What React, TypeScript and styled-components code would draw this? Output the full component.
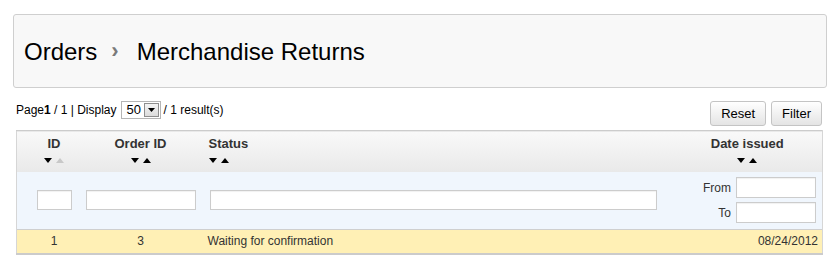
import React from "react";
import styled, { createGlobalStyle } from "styled-components";

const Global = createGlobalStyle`
  html, body { margin: 0; padding: 0; background: #fff; }
  body { font-family: "Liberation Sans", Arial, sans-serif; color: #000; }
  * { box-sizing: border-box; }
`;

const Page = styled.div`
  width: 834px;
  padding: 14px 0 0 0;
`;

const TitleBox = styled.div`
  margin: 0 7px 0 13px;
  height: 74px;
  background: #f8f8f8;
  border: 1px solid #cfcfcf;
  border-radius: 3px;
  display: flex;
  align-items: center;
  padding: 0 0 0 10px;
  font-size: 24px;
  color: #000;
`;

const Crumb = styled.span`
  line-height: 28px;
  margin-top: 1px;
`;

const Sep = styled.span`
  color: #7a7a7a;
  font-size: 22px;
  font-weight: bold;
  margin: 0 18px 0 14px;
  line-height: 28px;
`;

const Toolbar = styled.div`
  display: flex;
  justify-content: space-between;
  align-items: flex-start;
  margin: 13px 12px 4px 16px;
  height: 25px;
`;

const Pager = styled.div`
  display: flex;
  align-items: center;
  font-size: 12px;
  color: #000;
  height: 18px;
  white-space: pre;
`;

const Bold = styled.b`
  font-weight: bold;
`;

const FakeSelect = styled.div`
  display: inline-flex;
  align-items: center;
  height: 18px;
  width: 40px;
  border: 1px solid #b5b5b5;
  background: #fff;
  margin: 0 3px 0 4px;
  padding: 1px;
  font-size: 13px;
`;

const SelectValue = styled.span`
  flex: 1;
  padding-left: 4px;
  line-height: 14px;
`;

const SelectBtn = styled.span`
  width: 15px;
  height: 14px;
  border: 1px solid #8e8e8e;
  background: linear-gradient(#f4f4f4, #dcdcdc);
  display: flex;
  align-items: center;
  justify-content: center;
`;

const Buttons = styled.div`
  display: flex;
  gap: 5px;
`;

const Button = styled.button`
  height: 25px;
  padding: 0 10px;
  font-family: "Liberation Sans", Arial, sans-serif;
  font-size: 13px;
  color: #000;
  background: linear-gradient(#ffffff, #e4e4e4);
  border: 1px solid #c4c4c4;
  border-radius: 3px;
  cursor: pointer;
`;

const Table = styled.table`
  margin-left: 16px;
  width: 806px;
  border-collapse: collapse;
  table-layout: fixed;
  font-size: 12px;
`;

const HeadRow = styled.tr`
  background: linear-gradient(#f9f9f9, #e9e9e9);
  border-top: 1px solid #cccccc;
  border-left: 1px solid #d6d6d6;
  border-right: 1px solid #d6d6d6;
  height: 41px;
`;

const Th = styled.th<{ $align?: string; $pl?: number }>`
  font-size: 13px;
  font-weight: bold;
  color: #333;
  text-align: ${(p) => p.$align || "center"};
  padding: 5px 7px 0 ${(p) => (p.$pl ?? 7)}px;
  vertical-align: top;
`;

const ThLabel = styled.div`
  line-height: 16px;
  height: 16px;
`;

const Arrows = styled.div<{ $align?: string }>`
  display: flex;
  justify-content: ${(p) => p.$align || "center"};
  gap: 4px;
  margin-top: 6px;
  height: 6px;
`;

const FilterRow = styled.tr`
  background: #f0f6fd;
  border-left: 1px solid #d6d6d6;
  border-right: 1px solid #d6d6d6;
  height: 58px;
`;

const Td = styled.td<{ $align?: string; $pr?: number; $pl?: number }>`
  padding: 0 ${(p) => p.$pr ?? 7}px 0 ${(p) => p.$pl ?? 7}px;
  text-align: ${(p) => p.$align || "left"};
  vertical-align: middle;
`;

const FilterInput = styled.input`
  display: block;
  width: 100%;
  height: 20px;
  border: 1px solid #cccccc;
  background: #fff;
  box-shadow: inset 0 1px 1px rgba(0, 0, 0, 0.06);
  padding: 0 3px;
  font-size: 12px;
  outline: none;
`;

const DateFilters = styled.div`
  display: flex;
  flex-direction: column;
  gap: 4px;
`;

const DateLine = styled.label`
  display: flex;
  align-items: center;
  justify-content: flex-end;
  gap: 5px;
  font-size: 12px;
  color: #333;
`;

const DateInput = styled(FilterInput)`
  width: 80px;
  height: 21px;
`;

const DataRow = styled.tr`
  background: #fff0b5;
  border-top: 1px solid #cfcfcf;
  border-left: 1px solid #d6d6d6;
  border-right: 1px solid #d6d6d6;
  border-bottom: 2px solid #cbcbcb;
  height: 24px;
  color: #333;
`;

const Tri = ({ up, color = "#000" }: { up?: boolean; color?: string }) => (
  <svg width="8" height="5" viewBox="0 0 8 5">
    <polygon points={up ? "0,5 8,5 4,0" : "0,0 8,0 4,5"} fill={color} />
  </svg>
);

const SortArrows = ({ align, upGray }: { align?: string; upGray?: boolean }) => (
  <Arrows $align={align}>
    <Tri />
    <Tri up color={upGray ? "#c8c8c8" : "#000"} />
  </Arrows>
);

export default function App() {
  return (
    <>
      <Global />
      <Page>
        <TitleBox>
          <Crumb>Orders</Crumb>
          <Sep>›</Sep>
          <Crumb>Merchandise Returns</Crumb>
        </TitleBox>
        <Toolbar>
          <Pager>
            Page<Bold>1</Bold> / 1 | Display
            <FakeSelect>
              <SelectValue>50</SelectValue>
              <SelectBtn>
                <svg width="7" height="4" viewBox="0 0 7 4">
                  <polygon points="0,0 7,0 3.5,4" fill="#000" />
                </svg>
              </SelectBtn>
            </FakeSelect>
            / 1 result(s)
          </Pager>
          <Buttons>
            <Button>Reset</Button>
            <Button>Filter</Button>
          </Buttons>
        </Toolbar>
        <Table>
          <colgroup>
            <col style={{ width: 13 }} />
            <col style={{ width: 49 }} />
            <col style={{ width: 124 }} />
            <col style={{ width: 461 }} />
            <col style={{ width: 159 }} />
          </colgroup>
          <thead>
            <HeadRow>
              <Th />
              <Th>
                <ThLabel>ID</ThLabel>
                <SortArrows upGray />
              </Th>
              <Th>
                <ThLabel>Order ID</ThLabel>
                <SortArrows />
              </Th>
              <Th $align="left" $pl={6}>
                <ThLabel>Status</ThLabel>
                <SortArrows align="flex-start" />
              </Th>
              <Th $pl={16}>
                <ThLabel>Date issued</ThLabel>
                <SortArrows />
              </Th>
            </HeadRow>
          </thead>
          <tbody>
            <FilterRow>
              <Td />
              <Td>
                <FilterInput />
              </Td>
              <Td>
                <FilterInput />
              </Td>
              <Td>
                <FilterInput />
              </Td>
              <Td $pr={6}>
                <DateFilters>
                  <DateLine>
                    From <DateInput />
                  </DateLine>
                  <DateLine>
                    To <DateInput />
                  </DateLine>
                </DateFilters>
              </Td>
            </FilterRow>
            <DataRow>
              <Td />
              <Td $align="center">1</Td>
              <Td $align="center">3</Td>
              <Td $pl={5}>Waiting for confirmation</Td>
              <Td $align="right" $pr={4}>
                08/24/2012
              </Td>
            </DataRow>
          </tbody>
        </Table>
      </Page>
    </>
  );
}
